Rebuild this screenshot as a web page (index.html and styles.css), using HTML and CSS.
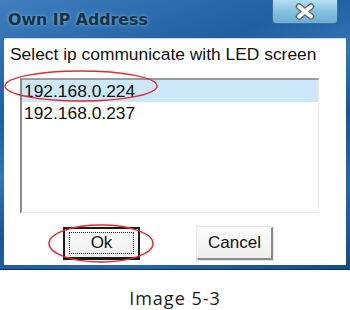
FILE: index.html
```html
<!DOCTYPE html>
<html lang="en">
<head>
    <meta charset="UTF-8">
    <title>Own IP Address</title>
    <link rel="stylesheet" href="styles.css">
</head>
<body>

    <div class="dialog">
        <div class="titlebar">
            <div class="title">Own IP Address</div>
            <div class="close-button">
                <svg width="22" height="17" viewBox="0 0 22 17">
                    <path d="M5 3.5 L17 13.5 M17 3.5 L5 13.5" stroke="#5a6470" stroke-width="6.5" stroke-linecap="round"/>
                    <path d="M5 3.5 L17 13.5 M17 3.5 L5 13.5" stroke="#ffffff" stroke-width="4" stroke-linecap="round"/>
                </svg>
            </div>
        </div>
        <div class="content">
            <div class="prompt">Select ip communicate with LED screen</div>
            <div class="listbox">
                <div class="list-item selected">192.168.0.224</div>
                <div class="list-item">192.168.0.237</div>
            </div>
            <div class="buttons">
                <div class="btn btn-default"><span class="focus">Ok</span></div>
                <div class="btn">Cancel</div>
            </div>
        </div>
    </div>

    <div class="caption">Image 5-3</div>

    <!-- red marks drawn over the screenshot -->
    <svg class="marks" width="350" height="310" viewBox="0 0 350 310">
        <ellipse cx="81" cy="86" rx="76" ry="15" fill="none" stroke="#e02a30" stroke-width="1.4"/>
        <ellipse cx="101" cy="243.5" rx="52" ry="18.5" fill="none" stroke="#e02a30" stroke-width="1.4"/>
    </svg>

</body>
</html>
```

FILE: styles.css
```css
* {
    margin: 0;
    padding: 0;
    box-sizing: border-box;
}

body {
    width: 350px;
    height: 310px;
    position: relative;
    background: #ffffff;
    font-family: "Liberation Sans", Arial, sans-serif;
    color: #111;
    overflow: hidden;
}

.dialog {
    width: 350px;
    height: 270px;
    padding: 0 4px 4px 4px;
    display: flex;
    flex-direction: column;
    background: linear-gradient(160deg, #3f7fbe 0%, #1f5fa2 30%, #3575b6 45%, #1a5494 60%, #2766a8 78%, #164a88 100%);
    border-bottom: 1px solid #0e3262;
}

.titlebar {
    height: 38px;
    display: flex;
    align-items: flex-start;
}

.title {
    padding: 10px 0 0 4px;
    font-family: "DejaVu Sans", Verdana, sans-serif;
    font-weight: bold;
    font-size: 15.8px;
    line-height: 20px;
    color: #143446;
    text-shadow: 0 0 4px rgba(190, 225, 250, 0.6);
}

.close-button {
    margin-left: auto;
    margin-right: 8px;
    width: 66px;
    height: 24px;
    display: flex;
    justify-content: center;
    align-items: center;
    border: 1px solid #3d6f98;
    border-top: none;
    border-radius: 0 0 4px 4px;
    background: linear-gradient(#b4def0, #86c0de 50%, #6aaed4);
}

.content {
    flex: 1;
    background: #ffffff;
    border-top: 1px solid #c7d9ea;
}

.prompt {
    padding: 5px 0 0 6px;
    font-size: 17.4px;
    line-height: 20px;
}

.listbox {
    margin: 14px 0 0 16px;
    width: 299px;
    height: 135px;
    border-top: 2px solid #9c9c9c;
    border-left: 2px solid #8a8a8a;
    border-right: 1px solid #ececec;
    border-bottom: 1px solid #ececec;
}

.list-item {
    height: 22px;
    line-height: 22px;
    padding-left: 2px;
    font-size: 17.4px;
}

.list-item.selected {
    background: #cce8f8;
}

.buttons {
    display: flex;
    gap: 57px;
    margin: 14px 0 0 59px;
}

.btn {
    width: 76px;
    height: 33px;
    display: flex;
    justify-content: center;
    align-items: center;
    font-size: 17px;
    background: linear-gradient(#fcfcfc, #eeeeee);
    border-top: 1px solid #ffffff;
    border-left: 1px solid #ffffff;
    border-right: 2px solid #8c8c8c;
    border-bottom: 2px solid #8c8c8c;
    box-shadow: 0 0 0 1px #e4e4e4;
}

.btn-default {
    width: 77px;
    border: 2px solid #1a1a1a;
    border-bottom-width: 3px;
    box-shadow: none;
    padding: 3px 4px;
}

.focus {
    width: 100%;
    height: 100%;
    display: flex;
    justify-content: center;
    align-items: center;
    border: 1px dotted #222;
}

.caption {
    margin-top: 16px;
    text-align: center;
    font-family: "Open Sans", sans-serif;
    font-size: 18px;
    line-height: 24px;
    letter-spacing: 1px;
    color: #1a1a1a;
}

.marks {
    position: absolute;
    top: 0;
    left: 0;
    pointer-events: none;
}
```
